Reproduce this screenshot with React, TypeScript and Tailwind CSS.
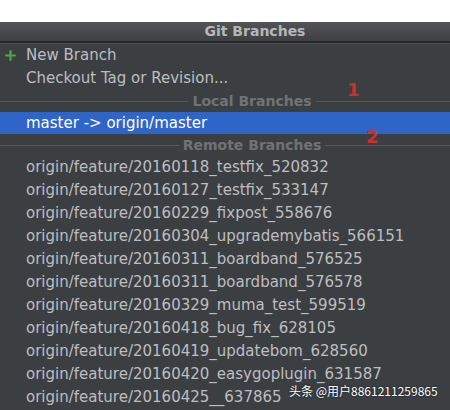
import { Plus } from "lucide-react";

const remotes = [
  "origin/feature/20160118_testfix_520832",
  "origin/feature/20160127_testfix_533147",
  "origin/feature/20160229_fixpost_558676",
  "origin/feature/20160304_upgrademybatis_566151",
  "origin/feature/20160311_boardband_576525",
  "origin/feature/20160311_boardband_576578",
  "origin/feature/20160329_muma_test_599519",
  "origin/feature/20160418_bug_fix_628105",
  "origin/feature/20160419_updatebom_628560",
  "origin/feature/20160420_easygoplugin_631587",
  "origin/feature/20160425__637865",
];

function Separator({ label }: { label: string }) {
  return (
    <div className="flex h-[22px] w-[504px] items-center">
      <div className="h-px flex-1 bg-[#55585c]" />
      <span className="px-1 text-[14px] font-bold text-[#707376]">{label}</span>
      <div className="h-px flex-1 bg-[#55585c]" />
    </div>
  );
}

export default function App() {
  return (
    <div className="relative h-[410px] w-[450px] overflow-hidden bg-white font-['DejaVu_Sans',sans-serif]">
      <div className="mt-[22px] h-[388px] bg-[#3c3f42]">
        {/* title bar */}
        <div className="flex h-[19px] w-[510px] items-center justify-center bg-gradient-to-b from-[#525356] to-[#3f4043] text-[14px] font-bold text-[#b5b7b9]">
          Git Branches
        </div>
        <div className="h-[2px] bg-[#27282a]" />
        <div className="h-px bg-[#4a4d50]" />

        <div className="text-[15px] leading-[23px] text-[#bcbec0]">
          <div className="flex h-[23px] items-center">
            <Plus className="ml-[3px] mr-[8px] h-[15px] w-[15px] text-[#4fa84c]" strokeWidth={3.5} />
            <span>New Branch</span>
          </div>
          <div className="h-[23px] pl-[26px]">Checkout Tag or Revision...</div>
          <Separator label="Local Branches" />
          <div className="h-[22px] bg-[#2f65c9] pl-[26px] leading-[22px] text-white">master -&gt; origin/master</div>
          <Separator label="Remote Branches" />
          {remotes.map((r) => (
            <div key={r} className="h-[23px] pl-[26px]">
              {r}
            </div>
          ))}
        </div>
      </div>

      <span className="absolute left-[347px] top-[76px] text-[18px] font-bold text-[#c9322a]">1</span>
      <span className="absolute left-[366px] top-[123px] text-[18px] font-bold text-[#c9322a]">2</span>

      <div className="absolute left-[289px] top-[382px] text-[12px] text-white [text-shadow:0_0_2px_rgba(0,0,0,0.8)] font-['Noto_Sans_CJK_SC',sans-serif]">
        头条 @用户8861211259865
      </div>
    </div>
  );
}
